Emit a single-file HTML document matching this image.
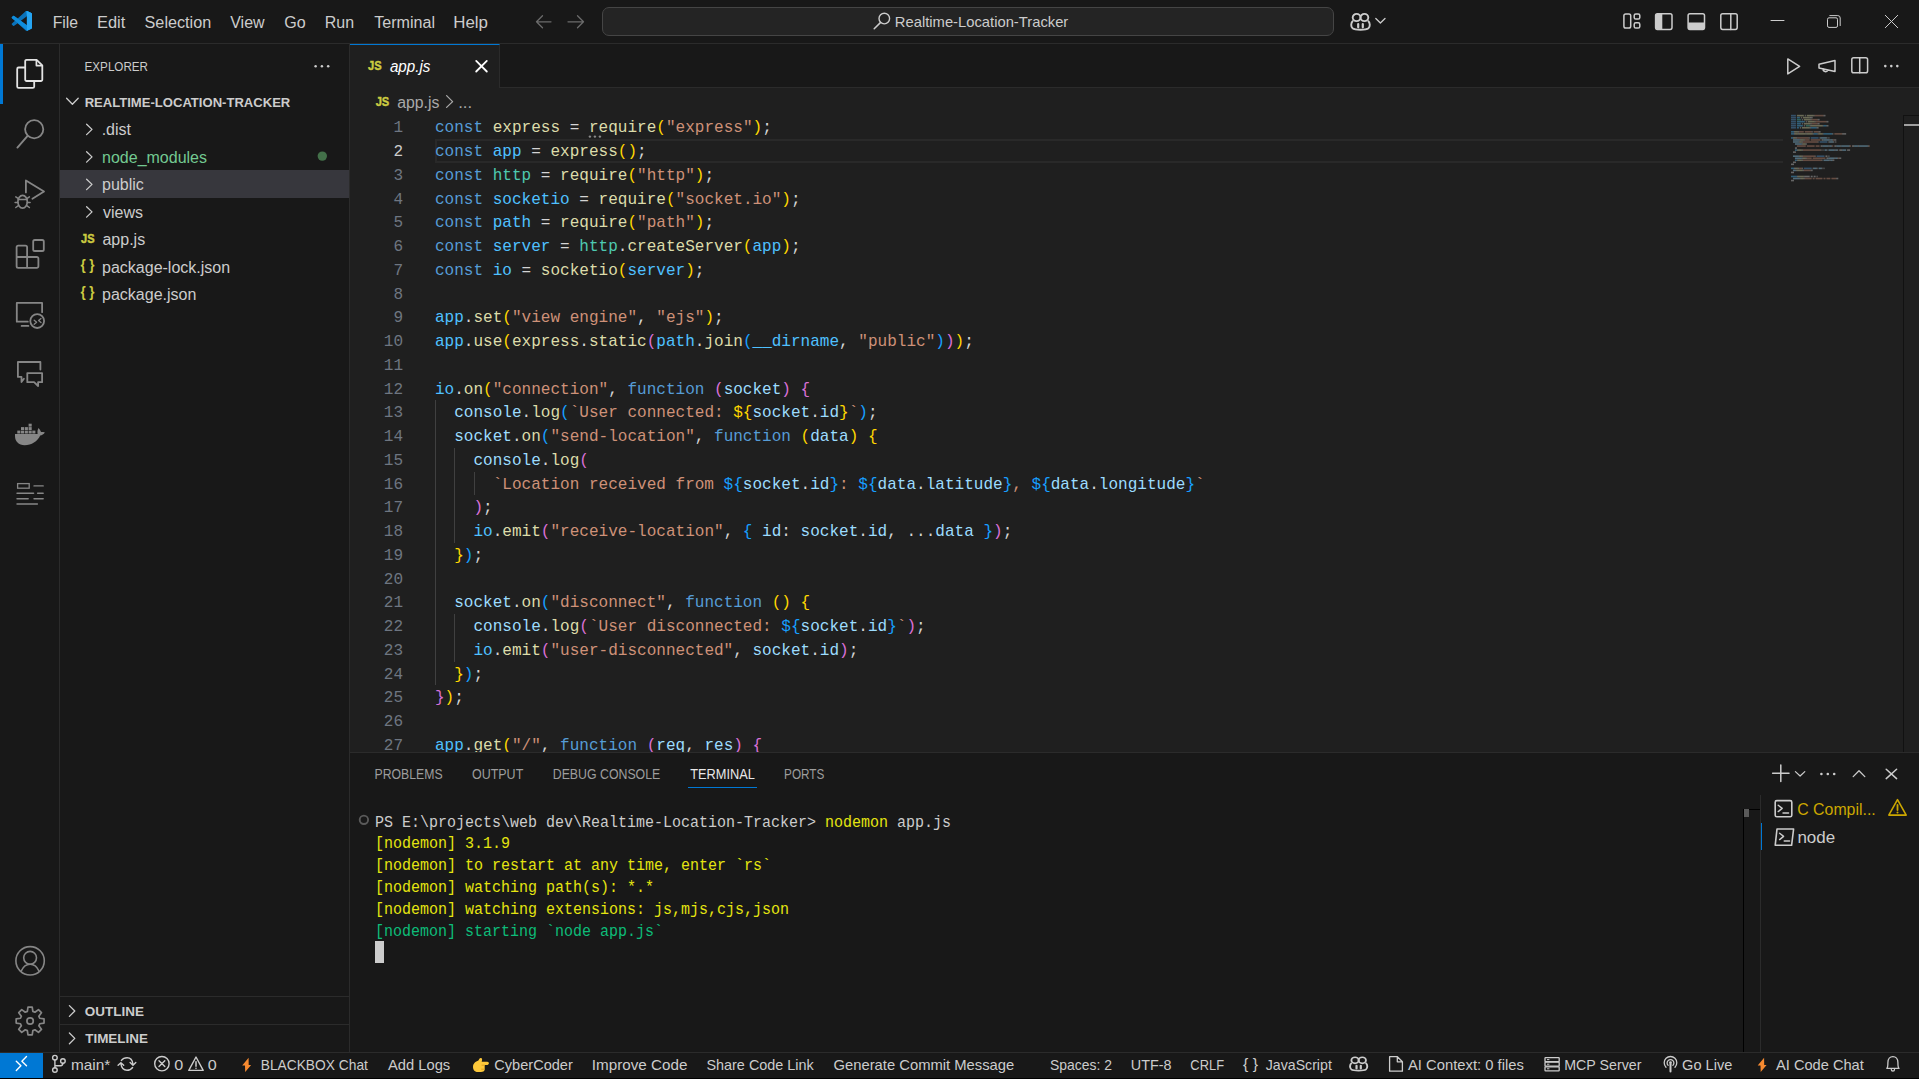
<!DOCTYPE html>
<html><head><meta charset="utf-8"><title>VS Code</title>
<style>
*{margin:0;padding:0;box-sizing:border-box}
html,body{width:1919px;height:1079px;overflow:hidden;background:#181818;font-family:"Liberation Sans",sans-serif;color:#cccccc}
.a{position:absolute}
#ov{position:absolute;left:0;top:0;width:1919px;height:1079px}
.ln{position:absolute;left:435px;height:23.75px;font-family:"Liberation Mono",monospace;font-size:17px;line-height:23.75px;white-space:pre;color:#d4d4d4;transform:scaleX(0.9430);transform-origin:0 0}
.num{position:absolute;left:360px;width:43px;text-align:right;height:23.75px;font-family:"Liberation Mono",monospace;font-size:17px;line-height:23.75px;color:#6e7681;transform:scaleX(0.943);transform-origin:43px 0}
.num.act{color:#cccccc}
.tl{position:absolute;left:375px;height:21.86px;font-family:"Liberation Mono",monospace;font-size:16px;line-height:21.86px;white-space:pre;transform:scaleX(0.9375);transform-origin:0 0}
.k{color:#569cd6}.v{color:#9cdcfe}.c{color:#4fc1ff}.f{color:#dcdcaa}.s{color:#ce9178}.n{color:#4ec9b0}
.b1{color:#ffd700}.b2{color:#da70d6}.b3{color:#179fff}
</style></head><body>
<div class="a" style="left:0;top:0;width:1919px;height:44px;background:#181818;border-bottom:1px solid #2b2b2b"></div>
<div class="a" style="left:602px;top:7px;width:731.5px;height:29px;background:#242424;border:1px solid #454545;border-radius:7px"></div>
<div class="a" style="left:0;top:44px;width:60px;height:1008px;background:#181818;border-right:1px solid #2b2b2b"></div>
<div class="a" style="left:0;top:44px;width:2.5px;height:60px;background:#0078d4"></div>
<div class="a" style="left:60px;top:44px;width:290px;height:1008px;background:#181818;border-right:1px solid #2b2b2b"></div>
<div class="a" style="left:60px;top:170.3px;width:289px;height:27.5px;background:#37373d"></div>
<div class="a" style="left:60px;top:996px;width:289px;height:1px;background:#2b2b2b"></div>
<div class="a" style="left:60px;top:1024px;width:289px;height:1px;background:#2b2b2b"></div>
<div class="a" style="left:350px;top:44px;width:1569px;height:44px;background:#181818;border-bottom:1px solid #2b2b2b"></div>
<div class="a" style="left:350px;top:44px;width:150px;height:44px;background:#1f1f1f;border-right:1px solid #2b2b2b;border-top:1.25px solid #0078d4"></div>
<div class="a" style="left:350px;top:87.5px;width:1569px;height:664.5px;background:#1f1f1f;overflow:hidden">
</div>
<div class="a" style="left:435px;top:138.8px;width:1348px;height:24.4px;border:2.2px solid #292929;border-right:none"></div>
<div class="a" style="left:1903px;top:115px;width:16px;height:637px;border-left:1px solid #111111;border-top:1px solid #111111"></div>
<div class="a" style="left:1904px;top:123.9px;width:15px;height:2.1px;background:#a0a0a0"></div>
<div class="a" style="left:0;top:0;width:1919px;height:752px;overflow:hidden">
<div class="num" style="top:116.40px">1</div><div class="num act" style="top:140.15px">2</div><div class="num" style="top:163.90px">3</div><div class="num" style="top:187.65px">4</div><div class="num" style="top:211.40px">5</div><div class="num" style="top:235.15px">6</div><div class="num" style="top:258.90px">7</div><div class="num" style="top:282.65px">8</div><div class="num" style="top:306.40px">9</div><div class="num" style="top:330.15px">10</div><div class="num" style="top:353.90px">11</div><div class="num" style="top:377.65px">12</div><div class="num" style="top:401.40px">13</div><div class="num" style="top:425.15px">14</div><div class="num" style="top:448.90px">15</div><div class="num" style="top:472.65px">16</div><div class="num" style="top:496.40px">17</div><div class="num" style="top:520.15px">18</div><div class="num" style="top:543.90px">19</div><div class="num" style="top:567.65px">20</div><div class="num" style="top:591.40px">21</div><div class="num" style="top:615.15px">22</div><div class="num" style="top:638.90px">23</div><div class="num" style="top:662.65px">24</div><div class="num" style="top:686.40px">25</div><div class="num" style="top:710.15px">26</div><div class="num" style="top:733.90px">27</div>
<div class="ln" style="top:116.40px"><span class="k">const</span> <span class="f">express</span> = <span class="f">require</span><span class="b1">(</span><span class="s">&quot;express&quot;</span><span class="b1">)</span>;</div><div class="ln" style="top:140.15px"><span class="k">const</span> <span class="c">app</span> = <span class="f">express</span><span class="b1">()</span>;</div><div class="ln" style="top:163.90px"><span class="k">const</span> <span class="n">http</span> = <span class="f">require</span><span class="b1">(</span><span class="s">&quot;http&quot;</span><span class="b1">)</span>;</div><div class="ln" style="top:187.65px"><span class="k">const</span> <span class="c">socketio</span> = <span class="f">require</span><span class="b1">(</span><span class="s">&quot;socket.io&quot;</span><span class="b1">)</span>;</div><div class="ln" style="top:211.40px"><span class="k">const</span> <span class="c">path</span> = <span class="f">require</span><span class="b1">(</span><span class="s">&quot;path&quot;</span><span class="b1">)</span>;</div><div class="ln" style="top:235.15px"><span class="k">const</span> <span class="c">server</span> = <span class="n">http</span>.<span class="f">createServer</span><span class="b1">(</span><span class="c">app</span><span class="b1">)</span>;</div><div class="ln" style="top:258.90px"><span class="k">const</span> <span class="c">io</span> = <span class="f">socketio</span><span class="b1">(</span><span class="c">server</span><span class="b1">)</span>;</div><div class="ln" style="top:282.65px"></div><div class="ln" style="top:306.40px"><span class="c">app</span>.<span class="f">set</span><span class="b1">(</span><span class="s">&quot;view engine&quot;</span>, <span class="s">&quot;ejs&quot;</span><span class="b1">)</span>;</div><div class="ln" style="top:330.15px"><span class="c">app</span>.<span class="f">use</span><span class="b1">(</span><span class="f">express</span>.<span class="f">static</span><span class="b2">(</span><span class="c">path</span>.<span class="f">join</span><span class="b3">(</span><span class="c">__dirname</span>, <span class="s">&quot;public&quot;</span><span class="b3">)</span><span class="b2">)</span><span class="b1">)</span>;</div><div class="ln" style="top:353.90px"></div><div class="ln" style="top:377.65px"><span class="c">io</span>.<span class="f">on</span><span class="b1">(</span><span class="s">&quot;connection&quot;</span>, <span class="k">function</span> <span class="b2">(</span><span class="v">socket</span><span class="b2">)</span> <span class="b2">{</span></div><div class="ln" style="top:401.40px">  <span class="v">console</span>.<span class="f">log</span><span class="b3">(</span><span class="s">`User connected: </span><span class="b1">${</span><span class="v">socket</span>.<span class="v">id</span><span class="b1">}</span><span class="s">`</span><span class="b3">)</span>;</div><div class="ln" style="top:425.15px">  <span class="v">socket</span>.<span class="f">on</span><span class="b3">(</span><span class="s">&quot;send-location&quot;</span>, <span class="k">function</span> <span class="b1">(</span><span class="v">data</span><span class="b1">)</span> <span class="b1">{</span></div><div class="ln" style="top:448.90px">    <span class="v">console</span>.<span class="f">log</span><span class="b2">(</span></div><div class="ln" style="top:472.65px">      <span class="s">`Location received from </span><span class="b3">${</span><span class="v">socket</span>.<span class="v">id</span><span class="b3">}</span><span class="s">: </span><span class="b3">${</span><span class="v">data</span>.<span class="v">latitude</span><span class="b3">}</span><span class="s">, </span><span class="b3">${</span><span class="v">data</span>.<span class="v">longitude</span><span class="b3">}</span><span class="s">`</span></div><div class="ln" style="top:496.40px">    <span class="b2">)</span>;</div><div class="ln" style="top:520.15px">    <span class="c">io</span>.<span class="f">emit</span><span class="b2">(</span><span class="s">&quot;receive-location&quot;</span>, <span class="b3">{</span> <span class="v">id</span>: <span class="v">socket</span>.<span class="v">id</span>, ...<span class="v">data</span> <span class="b3">}</span><span class="b2">)</span>;</div><div class="ln" style="top:543.90px">  <span class="b1">}</span><span class="b3">)</span>;</div><div class="ln" style="top:567.65px"></div><div class="ln" style="top:591.40px">  <span class="v">socket</span>.<span class="f">on</span><span class="b3">(</span><span class="s">&quot;disconnect&quot;</span>, <span class="k">function</span> <span class="b1">()</span> <span class="b1">{</span></div><div class="ln" style="top:615.15px">    <span class="v">console</span>.<span class="f">log</span><span class="b2">(</span><span class="s">`User disconnected: </span><span class="b3">${</span><span class="v">socket</span>.<span class="v">id</span><span class="b3">}</span><span class="s">`</span><span class="b2">)</span>;</div><div class="ln" style="top:638.90px">    <span class="c">io</span>.<span class="f">emit</span><span class="b2">(</span><span class="s">&quot;user-disconnected&quot;</span>, <span class="v">socket</span>.<span class="v">id</span><span class="b2">)</span>;</div><div class="ln" style="top:662.65px">  <span class="b1">}</span><span class="b3">)</span>;</div><div class="ln" style="top:686.40px"><span class="b2">}</span><span class="b1">)</span>;</div><div class="ln" style="top:710.15px"></div><div class="ln" style="top:733.90px"><span class="c">app</span>.<span class="f">get</span><span class="b1">(</span><span class="s">&quot;/&quot;</span>, <span class="k">function</span> <span class="b2">(</span><span class="v">req</span>, <span class="v">res</span><span class="b2">)</span> <span class="b2">{</span></div>
<div class="a" style="left:435.0px;top:400.40px;width:1px;height:285.00px;background:#404040"></div><div class="a" style="left:454.2px;top:447.90px;width:1px;height:95.00px;background:#404040"></div><div class="a" style="left:454.2px;top:614.15px;width:1px;height:47.50px;background:#404040"></div><div class="a" style="left:473.5px;top:471.65px;width:1px;height:23.75px;background:#404040"></div>
</div>

<div class="a" style="left:350px;top:752px;width:1569px;height:300px;background:#181818;border-top:1px solid #2b2b2b"></div>
<div class="a" style="left:688px;top:786.75px;width:69px;height:1.5px;background:#0078d4"></div>
<div class="tl" style="top:812.60px"><span style="color:#cccccc">PS E:\projects\web dev\Realtime-Location-Tracker&gt; </span><span style="color:#e5e510">nodemon</span><span style="color:#cccccc"> app.js</span></div><div class="tl" style="top:834.46px"><span style="color:#e5e510">[nodemon] 3.1.9</span></div><div class="tl" style="top:856.32px"><span style="color:#e5e510">[nodemon] to restart at any time, enter `rs`</span></div><div class="tl" style="top:878.18px"><span style="color:#e5e510">[nodemon] watching path(s): *.*</span></div><div class="tl" style="top:900.04px"><span style="color:#e5e510">[nodemon] watching extensions: js,mjs,cjs,json</span></div><div class="tl" style="top:921.90px"><span style="color:#0dbc79">[nodemon] starting `node app.js`</span></div>
<div class="a" style="left:375px;top:941.2px;width:9px;height:21.4px;background:#cccccc"></div>
<div class="a" style="left:1760px;top:795px;width:1px;height:257px;background:#2b2b2b"></div>
<div class="a" style="left:1761px;top:823px;width:1px;height:27px;background:#0078d4"></div>
<div class="a" style="left:1743px;top:809px;width:1px;height:243px;background:#000"></div>
<div class="a" style="left:1743px;top:809px;width:17px;height:1px;background:#000"></div>
<div class="a" style="left:1744px;top:809px;width:5px;height:8px;background:#5a5a5a"></div>
<div class="a" style="left:0;top:1051.5px;width:1919px;height:27.5px;background:#181818;border-top:1px solid #2b2b2b"></div>
<div class="a" style="left:0;top:1052.5px;width:43px;height:26.5px;background:#0078d4"></div>
<div class="a" style="left:0;top:1078px;width:1919px;height:1px;background:#000"></div>
<svg id="ov" width="1919" height="1079" viewBox="0 0 1919 1079" font-family='"Liberation Sans",sans-serif'>
<g transform="translate(11.7,10.9) scale(0.203,0.199)"><path fill="#0a72ba" d="M96.46 10.8L75.86.87a6.23 6.23 0 0 0-7.1 1.2L29.35 38.04 12.18 25.01a4.16 4.16 0 0 0-5.32.24L1.35 30.26a4.17 4.17 0 0 0 0 6.16L16.24 50 1.35 63.58a4.17 4.17 0 0 0 0 6.16l5.51 5.01a4.16 4.16 0 0 0 5.32.24l17.17-13.03 39.41 35.97a6.22 6.22 0 0 0 7.1 1.2l20.6-9.92A6.25 6.25 0 0 0 100 83.57V16.43a6.25 6.25 0 0 0-3.54-5.63zM75.01 72.7L45.1 50l29.91-22.7z"/><path fill="#0f8ddc" transform="translate(0,100) scale(1,-1)" d="M75.01 72.7V27.3L29.35 61.96 12.18 74.99a4.16 4.16 0 0 1-5.32-.24l-5.51-5.01a4.17 4.17 0 0 1 0-6.16L75.86.87 96.46 10.8A6.25 6.25 0 0 1 100 16.43v67.14a6.25 6.25 0 0 1-3.54 5.63l-20.6 9.92a6.22 6.22 0 0 1-7.1-1.2z"/><path fill="#26a5f2" d="M72.5 1.6 L75.86 .87 L96.46 10.8 A6.25 6.25 0 0 1 100 16.43 V83.57 A6.25 6.25 0 0 1 96.46 89.2 L75.86 99.13 L72.5 98.4 L75 96 V4 Z"/></g><path d="M551 21.8 H536.5 M542.5 15.8 L536.5 21.8 L542.5 27.8" fill="none" stroke="#6b6b6b" stroke-width="1.3" stroke-linecap="round" stroke-linejoin="round" /><path d="M568 21.8 H583.5 M577.5 15.8 L583.5 21.8 L577.5 27.8" fill="none" stroke="#6b6b6b" stroke-width="1.3" stroke-linecap="round" stroke-linejoin="round" /><circle cx="884.3" cy="18.6" r="5.3" fill="none" stroke="#cccccc" stroke-width="1.4"/><path d="M880.4 22.6 L874.2 28.8" fill="none" stroke="#cccccc" stroke-width="1.5" stroke-linecap="round" stroke-linejoin="round" /><g transform="translate(1350,11.7) scale(1.0,1.0)" fill="none" stroke="#cccccc" stroke-width="1.9"><ellipse cx="6.6" cy="5.8" rx="3.9" ry="3.6"/><ellipse cx="14.4" cy="5.8" rx="3.9" ry="3.6"/><path d="M3 9 C0.6 11 0.8 15 2.6 16.6 C5 18.6 16 18.6 18.4 16.6 C20.2 15 20.4 11 18 9"/><path d="M8.2 12.4 V15.6 M12.8 12.4 V15.6" stroke-width="2.2" stroke-linecap="round"/></g><path d="M1375.8 18.5 L1380.4 23 L1385 18.5" fill="none" stroke="#cccccc" stroke-width="1.3" stroke-linecap="round" stroke-linejoin="round" /><rect x="1623.9" y="13.9" width="6.8" height="14.2" rx="1.8" fill="none" stroke="#cccccc" stroke-width="1.5"/><rect x="1634.2" y="13.9" width="5.6" height="5.2" rx="1.6" fill="none" stroke="#cccccc" stroke-width="1.5"/><rect x="1634.2" y="22.8" width="5.6" height="5.2" rx="1.6" fill="none" stroke="#cccccc" stroke-width="1.5"/><rect x="1655.6" y="13.8" width="16.4" height="15.6" rx="1.8" fill="none" stroke="#cccccc" stroke-width="1.5"/><path d="M1655.6 15.5 a1.8 1.8 0 0 1 1.8-1.8 H1662.3 V29.4 H1657.4 a1.8 1.8 0 0 1-1.8-1.8Z" fill="#cccccc"/><rect x="1688.1" y="13.8" width="16.4" height="15.6" rx="1.8" fill="none" stroke="#cccccc" stroke-width="1.5"/><path d="M1688.1 22.5 H1704.5 V27.6 a1.8 1.8 0 0 1-1.8 1.8 H1689.9 a1.8 1.8 0 0 1-1.8-1.8Z" fill="#cccccc"/><rect x="1720.8" y="13.8" width="16.4" height="15.6" rx="1.8" fill="none" stroke="#cccccc" stroke-width="1.5"/><path d="M1730.8 13.8 V29.4" fill="none" stroke="#cccccc" stroke-width="1.5" stroke-linecap="round" stroke-linejoin="round" /><path d="M1771 20.5 H1784" fill="none" stroke="#cccccc" stroke-width="1.0" stroke-linecap="round" stroke-linejoin="round" /><rect x="1827.5" y="17.8" width="10" height="9.6" rx="1.5" fill="none" stroke="#cccccc" stroke-width="1"/><path d="M1829.8 15.6 H1837.8 a2.4 2.4 0 0 1 2.4 2.4 V25.6" fill="none" stroke="#cccccc" stroke-width="1.0" stroke-linecap="round" stroke-linejoin="round" /><path d="M1885.3 15.3 L1897.7 27.7 M1897.7 15.3 L1885.3 27.7" fill="none" stroke="#cccccc" stroke-width="1.0" stroke-linecap="round" stroke-linejoin="round" /><path d="M26.6 59.8 H36.6 L42.3 65.4 V79.6 a1.4 1.4 0 0 1 -1.4 1.4 H26.6 a1.4 1.4 0 0 1 -1.4 -1.4 V61.2 a1.4 1.4 0 0 1 1.4 -1.4 Z" fill="none" stroke="#e4e4e4" stroke-width="1.8" stroke-linecap="round" stroke-linejoin="round" /><path d="M36.4 60.4 V65.6 H41.6" fill="none" stroke="#e4e4e4" stroke-width="1.7" stroke-linecap="round" stroke-linejoin="round" /><path d="M25.2 67.5 H18.6 a1.4 1.4 0 0 0 -1.4 1.4 V86.5 a1.4 1.4 0 0 0 1.4 1.4 H32.8 a1.4 1.4 0 0 0 1.4 -1.4 V81" fill="none" stroke="#e4e4e4" stroke-width="1.8" stroke-linecap="round" stroke-linejoin="round" /><circle cx="34.2" cy="129.3" r="9.1" fill="none" stroke="#868686" stroke-width="1.8"/><path d="M27.6 135.9 L17.4 147.6" fill="none" stroke="#868686" stroke-width="1.9" stroke-linecap="round" stroke-linejoin="round" /><path d="M25.9 192.4 V180.4 L44 191.6 L32.4 198.8" fill="none" stroke="#868686" stroke-width="1.8" stroke-linecap="round" stroke-linejoin="round" /><ellipse cx="22.6" cy="201.7" rx="4.7" ry="6.4" fill="none" stroke="#868686" stroke-width="1.7"/><path d="M15.8 196.9 L18.4 198.6 M15.1 202.5 H17.9 M15.8 207.5 L18.4 205.6 M29.4 196.9 L26.8 198.6 M30.1 202.5 H27.3 M29.4 207.5 L26.8 205.6 M18.2 199.6 H27" fill="none" stroke="#868686" stroke-width="1.5" stroke-linecap="round" stroke-linejoin="round" /><path d="M18.2 245.7 H25.5 a1.6 1.6 0 0 1 1.6 1.6 V257 H36.8 a1.6 1.6 0 0 1 1.6 1.6 V266.2 a1.6 1.6 0 0 1 -1.6 1.6 H18.2 a1.6 1.6 0 0 1 -1.6 -1.6 V247.3 a1.6 1.6 0 0 1 1.6 -1.6 Z M16.6 257 H27.1 V267.8" fill="none" stroke="#868686" stroke-width="1.8"/><rect x="33.2" y="240" width="10.6" height="11" rx="1.6" fill="none" stroke="#868686" stroke-width="1.8"/><path d="M27.8 321.7 H16.8 V302.9 H42.1 V312.2" fill="none" stroke="#868686" stroke-width="1.8" stroke-linecap="round" stroke-linejoin="round" stroke-linecap="butt"/><path d="M21.6 325.9 H28.4" fill="none" stroke="#868686" stroke-width="1.8" stroke-linecap="round" stroke-linejoin="round" /><circle cx="37.2" cy="321.1" r="6.9" fill="none" stroke="#868686" stroke-width="1.8"/><path d="M34.2 320.2 L36.6 322.3 L34.2 324.3 M41 318.6 L38.6 320.6 L41 322.6" fill="none" stroke="#868686" stroke-width="1.3" stroke-linecap="round" stroke-linejoin="round" /><path d="M40.4 369.6 V362 H17.9 V376.9 H21.5 V382 L23.9 378.8" fill="none" stroke="#868686" stroke-width="1.8" stroke-linecap="round" stroke-linejoin="round" stroke-linecap="butt"/><path d="M27.3 373.1 H42.1 V382.2 H38.1 V386 L34.1 382.2 H27.3 Z" fill="none" stroke="#868686" stroke-width="1.8" stroke-linecap="round" stroke-linejoin="round" /><path d="M15 434 H37.6 C37.2 431.6 37.6 429.4 38.6 428 C39.6 429.2 40.6 430.6 41 432 C42.2 431.9 43.6 432 44.9 432.5 C43.6 434.2 42 435.2 40.2 435.6 C37.4 441.6 31.6 445.2 24.6 445.2 C18.6 445.2 15 441.4 15 436 Z" fill="#868686" /><rect x="17.3" y="430.6" width="3.1" height="2.9" fill="#868686"/><rect x="21.0" y="430.6" width="3.1" height="2.9" fill="#868686"/><rect x="24.8" y="430.6" width="3.1" height="2.9" fill="#868686"/><rect x="28.6" y="430.6" width="3.1" height="2.9" fill="#868686"/><rect x="32.3" y="430.6" width="3.1" height="2.9" fill="#868686"/><rect x="21.0" y="427.1" width="3.1" height="2.9" fill="#868686"/><rect x="24.8" y="427.1" width="3.1" height="2.9" fill="#868686"/><rect x="28.6" y="427.1" width="3.1" height="2.9" fill="#868686"/><rect x="28.6" y="423.7" width="3.1" height="2.9" fill="#868686"/><rect x="17.6" y="483.6" width="11.6" height="4.6" fill="none" stroke="#868686" stroke-width="1.3"/><path d="M34 485.9 H43.2 M17 493.2 H33.6 M37.6 493.2 H43.2 M17 498.8 H28.2 M34 498.8 H43.2 M17 504 H37.4" fill="none" stroke="#868686" stroke-width="1.4" stroke-linecap="round" stroke-linejoin="round" stroke-linecap="butt"/><circle cx="30.1" cy="960.8" r="14.2" fill="none" stroke="#868686" stroke-width="1.6"/><circle cx="30.1" cy="957.8" r="6.4" fill="none" stroke="#868686" stroke-width="1.6"/><path d="M21.4 970.8 C23.4 966 26.4 964.2 30.1 964.2 C33.8 964.2 36.8 966 38.8 970.8" fill="none" stroke="#868686" stroke-width="1.6" stroke-linecap="round" stroke-linejoin="round" /><path d="M27.34 1011.39 L27.99 1007.06 L32.21 1007.06 L32.86 1011.39 L34.94 1012.25 L38.47 1009.65 L41.45 1012.63 L38.85 1016.16 L39.71 1018.24 L44.04 1018.89 L44.04 1023.11 L39.71 1023.76 L38.85 1025.84 L41.45 1029.37 L38.47 1032.35 L34.94 1029.75 L32.86 1030.61 L32.21 1034.94 L27.99 1034.94 L27.34 1030.61 L25.26 1029.75 L21.73 1032.35 L18.75 1029.37 L21.35 1025.84 L20.49 1023.76 L16.16 1023.11 L16.16 1018.89 L20.49 1018.24 L21.35 1016.16 L18.75 1012.63 L21.73 1009.65 L25.26 1012.25Z" fill="none" stroke="#868686" stroke-width="1.7" stroke-linecap="round" stroke-linejoin="round" /><circle cx="30.1" cy="1021" r="3.2" fill="none" stroke="#868686" stroke-width="1.7"/><circle cx="315.6" cy="66.2" r="1.25" fill="#cccccc"/><circle cx="321.9" cy="66.2" r="1.25" fill="#cccccc"/><circle cx="328.2" cy="66.2" r="1.25" fill="#cccccc"/><path d="M66.6 98.3 L72.4 104.2 L78.2 98.3" fill="none" stroke="#cccccc" stroke-width="1.3" stroke-linecap="round" stroke-linejoin="round" /><path d="M86.6 124.20 L92 129.40 L86.6 134.60" fill="none" stroke="#cccccc" stroke-width="1.3" stroke-linecap="round" stroke-linejoin="round" /><path d="M86.6 151.70 L92 156.90 L86.6 162.10" fill="none" stroke="#cccccc" stroke-width="1.3" stroke-linecap="round" stroke-linejoin="round" /><path d="M86.6 179.20 L92 184.40 L86.6 189.60" fill="none" stroke="#cccccc" stroke-width="1.3" stroke-linecap="round" stroke-linejoin="round" /><path d="M86.6 206.70 L92 211.90 L86.6 217.10" fill="none" stroke="#cccccc" stroke-width="1.3" stroke-linecap="round" stroke-linejoin="round" /><circle cx="322.3" cy="156.1" r="4.7" fill="#437049"/><path d="M69.4 1005.6 L74.8 1011 L69.4 1016.4" fill="none" stroke="#cccccc" stroke-width="1.3" stroke-linecap="round" stroke-linejoin="round" /><path d="M69.4 1033 L74.8 1038.4 L69.4 1043.8" fill="none" stroke="#cccccc" stroke-width="1.3" stroke-linecap="round" stroke-linejoin="round" /><path d="M476.2 60.9 L486.8 71.5 M486.8 60.9 L476.2 71.5" fill="none" stroke="#ffffff" stroke-width="1.8" stroke-linecap="round" stroke-linejoin="round" /><path d="M446.6 95.6 L452.6 101.6 L446.6 107.4" fill="none" stroke="#a9a9a9" stroke-width="1.3" stroke-linecap="round" stroke-linejoin="round" /><path d="M1787.8 58.9 L1799.6 66.4 L1787.8 73.9 Z" fill="none" stroke="#cccccc" stroke-width="1.5" stroke-linecap="round" stroke-linejoin="round" /><path d="M1819 64.2 L1835 60.6 V71.6 L1819 68 Z M1823 68.8 a2.6 2.6 0 0 0 5 1.2" fill="none" stroke="#cccccc" stroke-width="1.5" stroke-linecap="round" stroke-linejoin="round" /><rect x="1851.8" y="57.8" width="15.8" height="15" rx="1.8" fill="none" stroke="#cccccc" stroke-width="1.5"/><path d="M1859.7 57.8 V72.8" fill="none" stroke="#cccccc" stroke-width="1.5" stroke-linecap="round" stroke-linejoin="round" /><circle cx="1885.3" cy="66.1" r="1.3" fill="#cccccc"/><circle cx="1891.3" cy="66.1" r="1.3" fill="#cccccc"/><circle cx="1897.3" cy="66.1" r="1.3" fill="#cccccc"/><path d="M1772.6 773.2 H1789 M1780.8 765 V781.4" fill="none" stroke="#cccccc" stroke-width="1.5" stroke-linecap="round" stroke-linejoin="round" /><path d="M1795.4 771.6 L1800.1 776 L1804.8 771.6" fill="none" stroke="#cccccc" stroke-width="1.2" stroke-linecap="round" stroke-linejoin="round" /><circle cx="1821.4" cy="774" r="1.3" fill="#cccccc"/><circle cx="1827.8" cy="774" r="1.3" fill="#cccccc"/><circle cx="1834.2" cy="774" r="1.3" fill="#cccccc"/><path d="M1853.2 776.6 L1859 770.8 L1864.8 776.6" fill="none" stroke="#cccccc" stroke-width="1.3" stroke-linecap="round" stroke-linejoin="round" /><path d="M1886.2 769.2 L1896.6 778.6 M1896.6 769.2 L1886.2 778.6" fill="none" stroke="#cccccc" stroke-width="1.5" stroke-linecap="round" stroke-linejoin="round" /><rect x="1775.2" y="800.6" width="16.6" height="16.2" rx="1.6" fill="none" stroke="#cccccc" stroke-width="1.6"/><path d="M1778.2 805.2 L1782.2 808.4 L1778.2 811.6 M1783 813 H1788.6" fill="none" stroke="#cccccc" stroke-width="1.4" stroke-linecap="round" stroke-linejoin="round" /><path d="M1897.5 799.6 L1906.2 815.1 H1888.8 Z" fill="none" stroke="#cca700" stroke-width="1.6" stroke-linecap="round" stroke-linejoin="round" /><path d="M1897.5 805 V810" fill="none" stroke="#cca700" stroke-width="1.8" stroke-linecap="round" stroke-linejoin="round" /><circle cx="1897.5" cy="812.6" r="1" fill="#cca700"/><path d="M1777 829 H1793.6 L1791.6 845.3 H1775.2 Z" fill="none" stroke="#cccccc" stroke-width="1.6" stroke-linecap="round" stroke-linejoin="round" /><path d="M1779.6 833.2 L1783.6 836.4 L1779.6 839.6 M1784.2 841 H1789.6" fill="none" stroke="#cccccc" stroke-width="1.4" stroke-linecap="round" stroke-linejoin="round" /><circle cx="363.9" cy="819.8" r="4.2" fill="none" stroke="#5a5a5a" stroke-width="1.9"/><path d="M16.3 1061.3 L20.9 1065.8 L16.3 1070.4" fill="none" stroke="#ffffff" stroke-width="1.4" stroke-linecap="round" stroke-linejoin="round" /><path d="M26.5 1056.6 L21.9 1061.2 L26.5 1065.8" fill="none" stroke="#ffffff" stroke-width="1.4" stroke-linecap="round" stroke-linejoin="round" /><circle cx="54.9" cy="1057.7" r="2.3" fill="none" stroke="#cccccc" stroke-width="1.4"/><circle cx="54.9" cy="1070" r="2.3" fill="none" stroke="#cccccc" stroke-width="1.4"/><circle cx="62.9" cy="1061" r="2.3" fill="none" stroke="#cccccc" stroke-width="1.4"/><path d="M54.9 1060 V1067.7 M54.9 1065.7 H60.6 C61.9 1065.7 62.9 1064.7 62.9 1063.3" fill="none" stroke="#cccccc" stroke-width="1.4" stroke-linecap="round" stroke-linejoin="round" /><path d="M121.4 1060.4 C122.7 1058.6 124.8 1057.7 127.1 1057.7 C130.1 1057.7 132.5 1059.9 132.9 1064.2 M130.1 1062.6 L133 1065.3 L135.8 1062.6" fill="none" stroke="#cccccc" stroke-width="1.4" stroke-linecap="round" stroke-linejoin="round" /><path d="M132.6 1067.5 C131.2 1069.4 129.3 1070.3 127 1070.3 C124 1070.3 121.5 1068.2 120.9 1063.7 M118.1 1065.3 L120.9 1062.7 L123.7 1065.3" fill="none" stroke="#cccccc" stroke-width="1.4" stroke-linecap="round" stroke-linejoin="round" /><circle cx="161.9" cy="1063.7" r="7.2" fill="none" stroke="#cccccc" stroke-width="1.4"/><path d="M159 1060.8 L164.8 1066.6 M164.8 1060.8 L159 1066.6" fill="none" stroke="#cccccc" stroke-width="1.4" stroke-linecap="round" stroke-linejoin="round" /><path d="M196 1057 L203.2 1070.4 H188.8 Z" fill="none" stroke="#cccccc" stroke-width="1.4" stroke-linecap="round" stroke-linejoin="round" /><path d="M196 1061.8 V1066.2" fill="none" stroke="#cccccc" stroke-width="1.5" stroke-linecap="round" stroke-linejoin="round" /><circle cx="196" cy="1068.2" r="0.8" fill="#cccccc"/><path d="M248.60 1057.80 L242.20 1065.50 H245.00 L245.20 1072.00 L251.10 1064.90 H248.70 Z" fill="#f78a30" /><path d="M1764.10 1057.80 L1757.70 1065.50 H1760.50 L1760.70 1072.00 L1766.60 1064.90 H1764.20 Z" fill="#f78a30" /><path d="M473 1067 C473 1063.6 475.6 1061.6 478.4 1060.6 L479.4 1058.8 C480.2 1057.6 482.4 1058 482.1 1059.8 L481.7 1061.8 H487.3 C488.3 1061.8 488.9 1062.6 488.9 1063.35 C488.9 1064.2 488.3 1064.9 487.3 1064.9 H484.7 V1069.8 C484.3 1071.4 483 1072 481 1072 H478 C475 1072 473 1070 473 1067 Z" fill="#fdc83a"/><path d="M481.6 1065.2 H484.6 M481.2 1069.2 H484.2" stroke="#e09a1c" stroke-width="0.9"/><g transform="translate(1348.9,1055.4) scale(0.93,0.84)" fill="none" stroke="#cccccc" stroke-width="2.043010752688172"><ellipse cx="6.6" cy="5.8" rx="3.9" ry="3.6"/><ellipse cx="14.4" cy="5.8" rx="3.9" ry="3.6"/><path d="M3 9 C0.6 11 0.8 15 2.6 16.6 C5 18.6 16 18.6 18.4 16.6 C20.2 15 20.4 11 18 9"/><path d="M8.2 12.4 V15.6 M12.8 12.4 V15.6" stroke-width="2.3655913978494625" stroke-linecap="round"/></g><path d="M1389.6 1056.7 H1397.4 L1402.4 1061.7 V1071.2 H1389.6 Z M1397.3 1056.9 V1061.8 H1402.2" fill="none" stroke="#cccccc" stroke-width="1.3" stroke-linecap="round" stroke-linejoin="round" /><rect x="1545" y="1057.6" width="14.2" height="4" rx="0.6" fill="none" stroke="#cccccc" stroke-width="1.3"/><rect x="1545" y="1062.2" width="14.2" height="4" rx="0.6" fill="none" stroke="#cccccc" stroke-width="1.3"/><rect x="1545" y="1066.8" width="14.2" height="4" rx="0.6" fill="none" stroke="#cccccc" stroke-width="1.3"/><path d="M1547.4 1059.6 H1549 M1547.4 1064.2 H1549 M1547.4 1068.8 H1549" fill="none" stroke="#cccccc" stroke-width="1.0" stroke-linecap="round" stroke-linejoin="round" /><circle cx="1670.5" cy="1062.7" r="1.4" fill="#cccccc"/><path d="M1670.5 1064.2 V1071.4" fill="none" stroke="#cccccc" stroke-width="2.0" stroke-linecap="round" stroke-linejoin="round" /><path d="M1666 1067.2 A6.3 6.3 0 1 1 1675 1067.2 M1668.1 1065.4 A3.4 3.4 0 1 1 1672.9 1065.4" fill="none" stroke="#cccccc" stroke-width="1.3" stroke-linecap="round" stroke-linejoin="round" /><path d="M1886.8 1068.4 H1899 C1898 1067.4 1897.9 1066.2 1897.9 1062.4 C1897.9 1059 1895.8 1056.6 1892.9 1056.6 C1890 1056.6 1887.9 1059 1887.9 1062.4 C1887.9 1066.2 1887.8 1067.4 1886.8 1068.4 Z M1891.3 1069.4 a1.6 1.6 0 0 0 3.2 0" fill="none" stroke="#cccccc" stroke-width="1.3" stroke-linecap="round" stroke-linejoin="round" /><circle cx="589.9" cy="136.6" r="1.2" fill="#8a8a8a"/><circle cx="594.9" cy="136.6" r="1.2" fill="#8a8a8a"/><circle cx="599.9" cy="136.6" r="1.2" fill="#8a8a8a"/><rect x="1791.00" y="114.80" width="4.92" height="1.6" fill="#569cd6" opacity="0.40"/><rect x="1796.91" y="114.80" width="6.89" height="1.6" fill="#dcdcaa" opacity="0.40"/><rect x="1804.79" y="114.80" width="0.98" height="1.6" fill="#d4d4d4" opacity="0.40"/><rect x="1806.76" y="114.80" width="6.89" height="1.6" fill="#dcdcaa" opacity="0.40"/><rect x="1813.65" y="114.80" width="0.98" height="1.6" fill="#d4d4d4" opacity="0.40"/><rect x="1814.64" y="114.80" width="8.87" height="1.6" fill="#ce9178" opacity="0.40"/><rect x="1823.50" y="114.80" width="0.98" height="1.6" fill="#d4d4d4" opacity="0.40"/><rect x="1824.49" y="114.80" width="0.98" height="1.6" fill="#d4d4d4" opacity="0.40"/><rect x="1791.00" y="116.83" width="4.92" height="1.6" fill="#569cd6" opacity="0.40"/><rect x="1796.91" y="116.83" width="2.96" height="1.6" fill="#4fc1ff" opacity="0.40"/><rect x="1800.85" y="116.83" width="0.98" height="1.6" fill="#d4d4d4" opacity="0.40"/><rect x="1802.82" y="116.83" width="6.89" height="1.6" fill="#dcdcaa" opacity="0.40"/><rect x="1809.71" y="116.83" width="1.97" height="1.6" fill="#d4d4d4" opacity="0.40"/><rect x="1811.68" y="116.83" width="0.98" height="1.6" fill="#d4d4d4" opacity="0.40"/><rect x="1791.00" y="118.86" width="4.92" height="1.6" fill="#569cd6" opacity="0.40"/><rect x="1796.91" y="118.86" width="3.94" height="1.6" fill="#4ec9b0" opacity="0.40"/><rect x="1801.83" y="118.86" width="0.98" height="1.6" fill="#d4d4d4" opacity="0.40"/><rect x="1803.80" y="118.86" width="6.89" height="1.6" fill="#dcdcaa" opacity="0.40"/><rect x="1810.70" y="118.86" width="0.98" height="1.6" fill="#d4d4d4" opacity="0.40"/><rect x="1811.68" y="118.86" width="5.91" height="1.6" fill="#ce9178" opacity="0.40"/><rect x="1817.59" y="118.86" width="0.98" height="1.6" fill="#d4d4d4" opacity="0.40"/><rect x="1818.58" y="118.86" width="0.98" height="1.6" fill="#d4d4d4" opacity="0.40"/><rect x="1791.00" y="120.89" width="4.92" height="1.6" fill="#569cd6" opacity="0.40"/><rect x="1796.91" y="120.89" width="7.88" height="1.6" fill="#4fc1ff" opacity="0.40"/><rect x="1805.77" y="120.89" width="0.98" height="1.6" fill="#d4d4d4" opacity="0.40"/><rect x="1807.74" y="120.89" width="6.89" height="1.6" fill="#dcdcaa" opacity="0.40"/><rect x="1814.64" y="120.89" width="0.98" height="1.6" fill="#d4d4d4" opacity="0.40"/><rect x="1815.62" y="120.89" width="10.83" height="1.6" fill="#ce9178" opacity="0.40"/><rect x="1826.46" y="120.89" width="0.98" height="1.6" fill="#d4d4d4" opacity="0.40"/><rect x="1827.44" y="120.89" width="0.98" height="1.6" fill="#d4d4d4" opacity="0.40"/><rect x="1791.00" y="122.92" width="4.92" height="1.6" fill="#569cd6" opacity="0.40"/><rect x="1796.91" y="122.92" width="3.94" height="1.6" fill="#4fc1ff" opacity="0.40"/><rect x="1801.83" y="122.92" width="0.98" height="1.6" fill="#d4d4d4" opacity="0.40"/><rect x="1803.80" y="122.92" width="6.89" height="1.6" fill="#dcdcaa" opacity="0.40"/><rect x="1810.70" y="122.92" width="0.98" height="1.6" fill="#d4d4d4" opacity="0.40"/><rect x="1811.68" y="122.92" width="5.91" height="1.6" fill="#ce9178" opacity="0.40"/><rect x="1817.59" y="122.92" width="0.98" height="1.6" fill="#d4d4d4" opacity="0.40"/><rect x="1818.58" y="122.92" width="0.98" height="1.6" fill="#d4d4d4" opacity="0.40"/><rect x="1791.00" y="124.95" width="4.92" height="1.6" fill="#569cd6" opacity="0.40"/><rect x="1796.91" y="124.95" width="5.91" height="1.6" fill="#4fc1ff" opacity="0.40"/><rect x="1803.80" y="124.95" width="0.98" height="1.6" fill="#d4d4d4" opacity="0.40"/><rect x="1805.77" y="124.95" width="3.94" height="1.6" fill="#4ec9b0" opacity="0.40"/><rect x="1809.71" y="124.95" width="0.98" height="1.6" fill="#d4d4d4" opacity="0.40"/><rect x="1810.70" y="124.95" width="11.82" height="1.6" fill="#dcdcaa" opacity="0.40"/><rect x="1822.52" y="124.95" width="0.98" height="1.6" fill="#d4d4d4" opacity="0.40"/><rect x="1823.50" y="124.95" width="2.96" height="1.6" fill="#4fc1ff" opacity="0.40"/><rect x="1826.46" y="124.95" width="0.98" height="1.6" fill="#d4d4d4" opacity="0.40"/><rect x="1827.44" y="124.95" width="0.98" height="1.6" fill="#d4d4d4" opacity="0.40"/><rect x="1791.00" y="126.98" width="4.92" height="1.6" fill="#569cd6" opacity="0.40"/><rect x="1796.91" y="126.98" width="1.97" height="1.6" fill="#4fc1ff" opacity="0.40"/><rect x="1799.86" y="126.98" width="0.98" height="1.6" fill="#d4d4d4" opacity="0.40"/><rect x="1801.83" y="126.98" width="7.88" height="1.6" fill="#dcdcaa" opacity="0.40"/><rect x="1809.71" y="126.98" width="0.98" height="1.6" fill="#d4d4d4" opacity="0.40"/><rect x="1810.70" y="126.98" width="5.91" height="1.6" fill="#4fc1ff" opacity="0.40"/><rect x="1816.61" y="126.98" width="0.98" height="1.6" fill="#d4d4d4" opacity="0.40"/><rect x="1817.59" y="126.98" width="0.98" height="1.6" fill="#d4d4d4" opacity="0.40"/><rect x="1791.00" y="131.04" width="2.96" height="1.6" fill="#4fc1ff" opacity="0.40"/><rect x="1793.95" y="131.04" width="0.98" height="1.6" fill="#d4d4d4" opacity="0.40"/><rect x="1794.94" y="131.04" width="2.96" height="1.6" fill="#dcdcaa" opacity="0.40"/><rect x="1797.89" y="131.04" width="0.98" height="1.6" fill="#d4d4d4" opacity="0.40"/><rect x="1798.88" y="131.04" width="4.92" height="1.6" fill="#ce9178" opacity="0.40"/><rect x="1804.79" y="131.04" width="6.89" height="1.6" fill="#ce9178" opacity="0.40"/><rect x="1811.68" y="131.04" width="0.98" height="1.6" fill="#d4d4d4" opacity="0.40"/><rect x="1813.65" y="131.04" width="4.92" height="1.6" fill="#ce9178" opacity="0.40"/><rect x="1818.58" y="131.04" width="0.98" height="1.6" fill="#d4d4d4" opacity="0.40"/><rect x="1819.56" y="131.04" width="0.98" height="1.6" fill="#d4d4d4" opacity="0.40"/><rect x="1791.00" y="133.07" width="2.96" height="1.6" fill="#4fc1ff" opacity="0.40"/><rect x="1793.95" y="133.07" width="0.98" height="1.6" fill="#d4d4d4" opacity="0.40"/><rect x="1794.94" y="133.07" width="2.96" height="1.6" fill="#dcdcaa" opacity="0.40"/><rect x="1797.89" y="133.07" width="0.98" height="1.6" fill="#d4d4d4" opacity="0.40"/><rect x="1798.88" y="133.07" width="6.89" height="1.6" fill="#dcdcaa" opacity="0.40"/><rect x="1805.77" y="133.07" width="0.98" height="1.6" fill="#d4d4d4" opacity="0.40"/><rect x="1806.76" y="133.07" width="5.91" height="1.6" fill="#dcdcaa" opacity="0.40"/><rect x="1812.67" y="133.07" width="0.98" height="1.6" fill="#d4d4d4" opacity="0.40"/><rect x="1813.65" y="133.07" width="3.94" height="1.6" fill="#4fc1ff" opacity="0.40"/><rect x="1817.59" y="133.07" width="0.98" height="1.6" fill="#d4d4d4" opacity="0.40"/><rect x="1818.58" y="133.07" width="3.94" height="1.6" fill="#dcdcaa" opacity="0.40"/><rect x="1822.52" y="133.07" width="0.98" height="1.6" fill="#d4d4d4" opacity="0.40"/><rect x="1823.50" y="133.07" width="8.87" height="1.6" fill="#4fc1ff" opacity="0.40"/><rect x="1832.37" y="133.07" width="0.98" height="1.6" fill="#d4d4d4" opacity="0.40"/><rect x="1834.34" y="133.07" width="7.88" height="1.6" fill="#ce9178" opacity="0.40"/><rect x="1842.22" y="133.07" width="0.98" height="1.6" fill="#d4d4d4" opacity="0.40"/><rect x="1843.20" y="133.07" width="0.98" height="1.6" fill="#d4d4d4" opacity="0.40"/><rect x="1844.19" y="133.07" width="0.98" height="1.6" fill="#d4d4d4" opacity="0.40"/><rect x="1845.17" y="133.07" width="0.98" height="1.6" fill="#d4d4d4" opacity="0.40"/><rect x="1791.00" y="137.13" width="1.97" height="1.6" fill="#4fc1ff" opacity="0.40"/><rect x="1792.97" y="137.13" width="0.98" height="1.6" fill="#d4d4d4" opacity="0.40"/><rect x="1793.95" y="137.13" width="1.97" height="1.6" fill="#dcdcaa" opacity="0.40"/><rect x="1795.92" y="137.13" width="0.98" height="1.6" fill="#d4d4d4" opacity="0.40"/><rect x="1796.91" y="137.13" width="11.82" height="1.6" fill="#ce9178" opacity="0.40"/><rect x="1808.73" y="137.13" width="0.98" height="1.6" fill="#d4d4d4" opacity="0.40"/><rect x="1810.70" y="137.13" width="7.88" height="1.6" fill="#569cd6" opacity="0.40"/><rect x="1819.56" y="137.13" width="0.98" height="1.6" fill="#d4d4d4" opacity="0.40"/><rect x="1820.55" y="137.13" width="5.91" height="1.6" fill="#9cdcfe" opacity="0.40"/><rect x="1826.46" y="137.13" width="0.98" height="1.6" fill="#d4d4d4" opacity="0.40"/><rect x="1828.43" y="137.13" width="0.98" height="1.6" fill="#d4d4d4" opacity="0.40"/><rect x="1792.97" y="139.16" width="6.89" height="1.6" fill="#9cdcfe" opacity="0.40"/><rect x="1799.87" y="139.16" width="0.98" height="1.6" fill="#d4d4d4" opacity="0.40"/><rect x="1800.85" y="139.16" width="2.96" height="1.6" fill="#dcdcaa" opacity="0.40"/><rect x="1803.80" y="139.16" width="0.98" height="1.6" fill="#d4d4d4" opacity="0.40"/><rect x="1804.79" y="139.16" width="4.92" height="1.6" fill="#ce9178" opacity="0.40"/><rect x="1810.70" y="139.16" width="9.85" height="1.6" fill="#ce9178" opacity="0.40"/><rect x="1821.53" y="139.16" width="1.97" height="1.6" fill="#d4d4d4" opacity="0.40"/><rect x="1823.50" y="139.16" width="5.91" height="1.6" fill="#9cdcfe" opacity="0.40"/><rect x="1829.41" y="139.16" width="0.98" height="1.6" fill="#d4d4d4" opacity="0.40"/><rect x="1830.40" y="139.16" width="1.97" height="1.6" fill="#9cdcfe" opacity="0.40"/><rect x="1832.37" y="139.16" width="0.98" height="1.6" fill="#d4d4d4" opacity="0.40"/><rect x="1833.35" y="139.16" width="0.98" height="1.6" fill="#ce9178" opacity="0.40"/><rect x="1834.34" y="139.16" width="0.98" height="1.6" fill="#d4d4d4" opacity="0.40"/><rect x="1835.32" y="139.16" width="0.98" height="1.6" fill="#d4d4d4" opacity="0.40"/><rect x="1792.97" y="141.19" width="5.91" height="1.6" fill="#9cdcfe" opacity="0.40"/><rect x="1798.88" y="141.19" width="0.98" height="1.6" fill="#d4d4d4" opacity="0.40"/><rect x="1799.87" y="141.19" width="1.97" height="1.6" fill="#dcdcaa" opacity="0.40"/><rect x="1801.84" y="141.19" width="0.98" height="1.6" fill="#d4d4d4" opacity="0.40"/><rect x="1802.82" y="141.19" width="14.78" height="1.6" fill="#ce9178" opacity="0.40"/><rect x="1817.60" y="141.19" width="0.98" height="1.6" fill="#d4d4d4" opacity="0.40"/><rect x="1819.56" y="141.19" width="7.88" height="1.6" fill="#569cd6" opacity="0.40"/><rect x="1828.43" y="141.19" width="0.98" height="1.6" fill="#d4d4d4" opacity="0.40"/><rect x="1829.41" y="141.19" width="3.94" height="1.6" fill="#9cdcfe" opacity="0.40"/><rect x="1833.35" y="141.19" width="0.98" height="1.6" fill="#d4d4d4" opacity="0.40"/><rect x="1835.32" y="141.19" width="0.98" height="1.6" fill="#d4d4d4" opacity="0.40"/><rect x="1794.94" y="143.22" width="6.89" height="1.6" fill="#9cdcfe" opacity="0.40"/><rect x="1801.84" y="143.22" width="0.98" height="1.6" fill="#d4d4d4" opacity="0.40"/><rect x="1802.82" y="143.22" width="2.96" height="1.6" fill="#dcdcaa" opacity="0.40"/><rect x="1805.77" y="143.22" width="0.98" height="1.6" fill="#d4d4d4" opacity="0.40"/><rect x="1796.91" y="145.25" width="8.87" height="1.6" fill="#ce9178" opacity="0.40"/><rect x="1806.76" y="145.25" width="7.88" height="1.6" fill="#ce9178" opacity="0.40"/><rect x="1815.62" y="145.25" width="3.94" height="1.6" fill="#ce9178" opacity="0.40"/><rect x="1820.55" y="145.25" width="1.97" height="1.6" fill="#d4d4d4" opacity="0.40"/><rect x="1822.52" y="145.25" width="5.91" height="1.6" fill="#9cdcfe" opacity="0.40"/><rect x="1828.43" y="145.25" width="0.98" height="1.6" fill="#d4d4d4" opacity="0.40"/><rect x="1829.41" y="145.25" width="1.97" height="1.6" fill="#9cdcfe" opacity="0.40"/><rect x="1831.38" y="145.25" width="0.98" height="1.6" fill="#d4d4d4" opacity="0.40"/><rect x="1832.37" y="145.25" width="0.98" height="1.6" fill="#ce9178" opacity="0.40"/><rect x="1834.34" y="145.25" width="1.97" height="1.6" fill="#d4d4d4" opacity="0.40"/><rect x="1836.31" y="145.25" width="3.94" height="1.6" fill="#9cdcfe" opacity="0.40"/><rect x="1840.25" y="145.25" width="0.98" height="1.6" fill="#d4d4d4" opacity="0.40"/><rect x="1841.23" y="145.25" width="7.88" height="1.6" fill="#9cdcfe" opacity="0.40"/><rect x="1849.11" y="145.25" width="0.98" height="1.6" fill="#d4d4d4" opacity="0.40"/><rect x="1850.10" y="145.25" width="0.98" height="1.6" fill="#ce9178" opacity="0.40"/><rect x="1852.07" y="145.25" width="1.97" height="1.6" fill="#d4d4d4" opacity="0.40"/><rect x="1854.04" y="145.25" width="3.94" height="1.6" fill="#9cdcfe" opacity="0.40"/><rect x="1857.98" y="145.25" width="0.98" height="1.6" fill="#d4d4d4" opacity="0.40"/><rect x="1858.96" y="145.25" width="8.87" height="1.6" fill="#9cdcfe" opacity="0.40"/><rect x="1867.83" y="145.25" width="0.98" height="1.6" fill="#d4d4d4" opacity="0.40"/><rect x="1868.81" y="145.25" width="0.98" height="1.6" fill="#ce9178" opacity="0.40"/><rect x="1794.94" y="147.28" width="0.98" height="1.6" fill="#d4d4d4" opacity="0.40"/><rect x="1795.92" y="147.28" width="0.98" height="1.6" fill="#d4d4d4" opacity="0.40"/><rect x="1794.94" y="149.31" width="1.97" height="1.6" fill="#4fc1ff" opacity="0.40"/><rect x="1796.91" y="149.31" width="0.98" height="1.6" fill="#d4d4d4" opacity="0.40"/><rect x="1797.89" y="149.31" width="3.94" height="1.6" fill="#dcdcaa" opacity="0.40"/><rect x="1801.84" y="149.31" width="0.98" height="1.6" fill="#d4d4d4" opacity="0.40"/><rect x="1802.82" y="149.31" width="17.73" height="1.6" fill="#ce9178" opacity="0.40"/><rect x="1820.55" y="149.31" width="0.98" height="1.6" fill="#d4d4d4" opacity="0.40"/><rect x="1822.52" y="149.31" width="0.98" height="1.6" fill="#d4d4d4" opacity="0.40"/><rect x="1824.49" y="149.31" width="1.97" height="1.6" fill="#9cdcfe" opacity="0.40"/><rect x="1826.46" y="149.31" width="0.98" height="1.6" fill="#d4d4d4" opacity="0.40"/><rect x="1828.43" y="149.31" width="5.91" height="1.6" fill="#9cdcfe" opacity="0.40"/><rect x="1834.34" y="149.31" width="0.98" height="1.6" fill="#d4d4d4" opacity="0.40"/><rect x="1835.32" y="149.31" width="1.97" height="1.6" fill="#9cdcfe" opacity="0.40"/><rect x="1837.29" y="149.31" width="0.98" height="1.6" fill="#d4d4d4" opacity="0.40"/><rect x="1839.26" y="149.31" width="2.96" height="1.6" fill="#d4d4d4" opacity="0.40"/><rect x="1842.22" y="149.31" width="3.94" height="1.6" fill="#9cdcfe" opacity="0.40"/><rect x="1847.14" y="149.31" width="0.98" height="1.6" fill="#d4d4d4" opacity="0.40"/><rect x="1848.13" y="149.31" width="0.98" height="1.6" fill="#d4d4d4" opacity="0.40"/><rect x="1849.11" y="149.31" width="0.98" height="1.6" fill="#d4d4d4" opacity="0.40"/><rect x="1792.97" y="151.34" width="0.98" height="1.6" fill="#d4d4d4" opacity="0.40"/><rect x="1793.95" y="151.34" width="0.98" height="1.6" fill="#d4d4d4" opacity="0.40"/><rect x="1794.94" y="151.34" width="0.98" height="1.6" fill="#d4d4d4" opacity="0.40"/><rect x="1792.97" y="155.40" width="5.91" height="1.6" fill="#9cdcfe" opacity="0.40"/><rect x="1798.88" y="155.40" width="0.98" height="1.6" fill="#d4d4d4" opacity="0.40"/><rect x="1799.87" y="155.40" width="1.97" height="1.6" fill="#dcdcaa" opacity="0.40"/><rect x="1801.84" y="155.40" width="0.98" height="1.6" fill="#d4d4d4" opacity="0.40"/><rect x="1802.82" y="155.40" width="11.82" height="1.6" fill="#ce9178" opacity="0.40"/><rect x="1814.64" y="155.40" width="0.98" height="1.6" fill="#d4d4d4" opacity="0.40"/><rect x="1816.61" y="155.40" width="7.88" height="1.6" fill="#569cd6" opacity="0.40"/><rect x="1825.47" y="155.40" width="1.97" height="1.6" fill="#d4d4d4" opacity="0.40"/><rect x="1828.43" y="155.40" width="0.98" height="1.6" fill="#d4d4d4" opacity="0.40"/><rect x="1794.94" y="157.43" width="6.89" height="1.6" fill="#9cdcfe" opacity="0.40"/><rect x="1801.84" y="157.43" width="0.98" height="1.6" fill="#d4d4d4" opacity="0.40"/><rect x="1802.82" y="157.43" width="2.96" height="1.6" fill="#dcdcaa" opacity="0.40"/><rect x="1805.77" y="157.43" width="0.98" height="1.6" fill="#d4d4d4" opacity="0.40"/><rect x="1806.76" y="157.43" width="4.92" height="1.6" fill="#ce9178" opacity="0.40"/><rect x="1812.67" y="157.43" width="12.80" height="1.6" fill="#ce9178" opacity="0.40"/><rect x="1826.46" y="157.43" width="1.97" height="1.6" fill="#d4d4d4" opacity="0.40"/><rect x="1828.43" y="157.43" width="5.91" height="1.6" fill="#9cdcfe" opacity="0.40"/><rect x="1834.34" y="157.43" width="0.98" height="1.6" fill="#d4d4d4" opacity="0.40"/><rect x="1835.32" y="157.43" width="1.97" height="1.6" fill="#9cdcfe" opacity="0.40"/><rect x="1837.29" y="157.43" width="0.98" height="1.6" fill="#d4d4d4" opacity="0.40"/><rect x="1838.28" y="157.43" width="0.98" height="1.6" fill="#ce9178" opacity="0.40"/><rect x="1839.26" y="157.43" width="0.98" height="1.6" fill="#d4d4d4" opacity="0.40"/><rect x="1840.25" y="157.43" width="0.98" height="1.6" fill="#d4d4d4" opacity="0.40"/><rect x="1794.94" y="159.46" width="1.97" height="1.6" fill="#4fc1ff" opacity="0.40"/><rect x="1796.91" y="159.46" width="0.98" height="1.6" fill="#d4d4d4" opacity="0.40"/><rect x="1797.89" y="159.46" width="3.94" height="1.6" fill="#dcdcaa" opacity="0.40"/><rect x="1801.84" y="159.46" width="0.98" height="1.6" fill="#d4d4d4" opacity="0.40"/><rect x="1802.82" y="159.46" width="18.71" height="1.6" fill="#ce9178" opacity="0.40"/><rect x="1821.53" y="159.46" width="0.98" height="1.6" fill="#d4d4d4" opacity="0.40"/><rect x="1823.50" y="159.46" width="5.91" height="1.6" fill="#9cdcfe" opacity="0.40"/><rect x="1829.41" y="159.46" width="0.98" height="1.6" fill="#d4d4d4" opacity="0.40"/><rect x="1830.40" y="159.46" width="1.97" height="1.6" fill="#9cdcfe" opacity="0.40"/><rect x="1832.37" y="159.46" width="0.98" height="1.6" fill="#d4d4d4" opacity="0.40"/><rect x="1833.35" y="159.46" width="0.98" height="1.6" fill="#d4d4d4" opacity="0.40"/><rect x="1792.97" y="161.49" width="0.98" height="1.6" fill="#d4d4d4" opacity="0.40"/><rect x="1793.95" y="161.49" width="0.98" height="1.6" fill="#d4d4d4" opacity="0.40"/><rect x="1794.94" y="161.49" width="0.98" height="1.6" fill="#d4d4d4" opacity="0.40"/><rect x="1791.00" y="163.52" width="0.98" height="1.6" fill="#d4d4d4" opacity="0.40"/><rect x="1791.98" y="163.52" width="0.98" height="1.6" fill="#d4d4d4" opacity="0.40"/><rect x="1792.97" y="163.52" width="0.98" height="1.6" fill="#d4d4d4" opacity="0.40"/><rect x="1791.00" y="167.58" width="2.96" height="1.6" fill="#4fc1ff" opacity="0.40"/><rect x="1793.95" y="167.58" width="0.98" height="1.6" fill="#d4d4d4" opacity="0.40"/><rect x="1794.94" y="167.58" width="2.96" height="1.6" fill="#dcdcaa" opacity="0.40"/><rect x="1797.89" y="167.58" width="0.98" height="1.6" fill="#d4d4d4" opacity="0.40"/><rect x="1798.88" y="167.58" width="2.96" height="1.6" fill="#ce9178" opacity="0.40"/><rect x="1801.83" y="167.58" width="0.98" height="1.6" fill="#d4d4d4" opacity="0.40"/><rect x="1803.80" y="167.58" width="7.88" height="1.6" fill="#569cd6" opacity="0.40"/><rect x="1812.67" y="167.58" width="0.98" height="1.6" fill="#d4d4d4" opacity="0.40"/><rect x="1813.65" y="167.58" width="2.96" height="1.6" fill="#9cdcfe" opacity="0.40"/><rect x="1816.61" y="167.58" width="0.98" height="1.6" fill="#d4d4d4" opacity="0.40"/><rect x="1818.58" y="167.58" width="2.96" height="1.6" fill="#9cdcfe" opacity="0.40"/><rect x="1821.53" y="167.58" width="0.98" height="1.6" fill="#d4d4d4" opacity="0.40"/><rect x="1823.50" y="167.58" width="0.98" height="1.6" fill="#d4d4d4" opacity="0.40"/><rect x="1792.97" y="169.61" width="2.96" height="1.6" fill="#9cdcfe" opacity="0.40"/><rect x="1795.92" y="169.61" width="0.98" height="1.6" fill="#d4d4d4" opacity="0.40"/><rect x="1796.91" y="169.61" width="5.91" height="1.6" fill="#dcdcaa" opacity="0.40"/><rect x="1802.82" y="169.61" width="0.98" height="1.6" fill="#d4d4d4" opacity="0.40"/><rect x="1803.80" y="169.61" width="6.89" height="1.6" fill="#ce9178" opacity="0.40"/><rect x="1810.70" y="169.61" width="0.98" height="1.6" fill="#d4d4d4" opacity="0.40"/><rect x="1811.68" y="169.61" width="0.98" height="1.6" fill="#d4d4d4" opacity="0.40"/><rect x="1791.00" y="171.64" width="0.98" height="1.6" fill="#d4d4d4" opacity="0.40"/><rect x="1791.98" y="171.64" width="0.98" height="1.6" fill="#d4d4d4" opacity="0.40"/><rect x="1792.97" y="171.64" width="0.98" height="1.6" fill="#d4d4d4" opacity="0.40"/><rect x="1791.00" y="175.70" width="5.91" height="1.6" fill="#4fc1ff" opacity="0.40"/><rect x="1796.91" y="175.70" width="0.98" height="1.6" fill="#d4d4d4" opacity="0.40"/><rect x="1797.89" y="175.70" width="5.91" height="1.6" fill="#dcdcaa" opacity="0.40"/><rect x="1803.81" y="175.70" width="0.98" height="1.6" fill="#d4d4d4" opacity="0.40"/><rect x="1804.79" y="175.70" width="4.92" height="1.6" fill="#d4d4d4" opacity="0.40"/><rect x="1810.70" y="175.70" width="1.97" height="1.6" fill="#d4d4d4" opacity="0.40"/><rect x="1813.65" y="175.70" width="1.97" height="1.6" fill="#d4d4d4" opacity="0.40"/><rect x="1816.61" y="175.70" width="0.98" height="1.6" fill="#d4d4d4" opacity="0.40"/><rect x="1792.97" y="177.73" width="6.89" height="1.6" fill="#9cdcfe" opacity="0.40"/><rect x="1799.87" y="177.73" width="0.98" height="1.6" fill="#d4d4d4" opacity="0.40"/><rect x="1800.85" y="177.73" width="2.96" height="1.6" fill="#dcdcaa" opacity="0.40"/><rect x="1803.80" y="177.73" width="0.98" height="1.6" fill="#d4d4d4" opacity="0.40"/><rect x="1804.79" y="177.73" width="6.89" height="1.6" fill="#ce9178" opacity="0.40"/><rect x="1812.67" y="177.73" width="1.97" height="1.6" fill="#ce9178" opacity="0.40"/><rect x="1815.62" y="177.73" width="6.89" height="1.6" fill="#ce9178" opacity="0.40"/><rect x="1823.50" y="177.73" width="1.97" height="1.6" fill="#ce9178" opacity="0.40"/><rect x="1826.46" y="177.73" width="3.94" height="1.6" fill="#ce9178" opacity="0.40"/><rect x="1831.38" y="177.73" width="4.92" height="1.6" fill="#ce9178" opacity="0.40"/><rect x="1836.31" y="177.73" width="0.98" height="1.6" fill="#d4d4d4" opacity="0.40"/><rect x="1837.29" y="177.73" width="0.98" height="1.6" fill="#d4d4d4" opacity="0.40"/><rect x="1791.00" y="179.76" width="0.98" height="1.6" fill="#d4d4d4" opacity="0.40"/><rect x="1791.98" y="179.76" width="0.98" height="1.6" fill="#d4d4d4" opacity="0.40"/><rect x="1792.97" y="179.76" width="0.98" height="1.6" fill="#d4d4d4" opacity="0.40"/>
<text x="52.74" y="28.20" font-size="16" fill="#cccccc" textLength="25.39" lengthAdjust="spacingAndGlyphs">File</text><text x="96.99" y="28.20" font-size="16" fill="#cccccc" textLength="28.25" lengthAdjust="spacingAndGlyphs">Edit</text><text x="144.57" y="28.20" font-size="16" fill="#cccccc" textLength="66.66" lengthAdjust="spacingAndGlyphs">Selection</text><text x="230.22" y="28.20" font-size="16" fill="#cccccc" textLength="34.37" lengthAdjust="spacingAndGlyphs">View</text><text x="284.20" y="28.20" font-size="16" fill="#cccccc" textLength="21.43" lengthAdjust="spacingAndGlyphs">Go</text><text x="324.72" y="28.20" font-size="16" fill="#cccccc" textLength="29.31" lengthAdjust="spacingAndGlyphs">Run</text><text x="374.18" y="28.20" font-size="16" fill="#cccccc" textLength="60.83" lengthAdjust="spacingAndGlyphs">Terminal</text><text x="453.25" y="28.20" font-size="16" fill="#cccccc" textLength="34.76" lengthAdjust="spacingAndGlyphs">Help</text><text x="894.82" y="27.30" font-size="15" fill="#cccccc" textLength="173.48" lengthAdjust="spacingAndGlyphs">Realtime-Location-Tracker</text><text x="84.57" y="71.20" font-size="13.5" fill="#cccccc" textLength="63.47" lengthAdjust="spacingAndGlyphs">EXPLORER</text><text x="84.65" y="106.60" font-size="13.5" fill="#cccccc" font-family='"Liberation Sans"' font-weight="bold" textLength="205.67" lengthAdjust="spacingAndGlyphs">REALTIME-LOCATION-TRACKER</text><text x="101.66" y="135.00" font-size="16" fill="#cccccc">.dist</text><text x="102.06" y="162.50" font-size="16" fill="#73c991">node_modules</text><text x="102.06" y="190.00" font-size="16" fill="#cccccc">public</text><text x="103.02" y="217.50" font-size="16" fill="#cccccc">views</text><text x="102.46" y="245.00" font-size="16" fill="#cccccc">app.js</text><text x="102.06" y="272.50" font-size="16" fill="#cccccc">package-lock.json</text><text x="102.06" y="300.00" font-size="16" fill="#cccccc">package.json</text><text x="84.86" y="1015.60" font-size="13.5" fill="#cccccc" font-family='"Liberation Sans"' font-weight="bold" textLength="59.06" lengthAdjust="spacingAndGlyphs">OUTLINE</text><text x="85.27" y="1043.30" font-size="13.5" fill="#cccccc" font-family='"Liberation Sans"' font-weight="bold" textLength="62.63" lengthAdjust="spacingAndGlyphs">TIMELINE</text><text x="389.90" y="72.10" font-size="16" fill="#ffffff" font-family='"Liberation Sans"' font-style="italic" textLength="40.59" lengthAdjust="spacingAndGlyphs">app.js</text><text x="397.17" y="107.80" font-size="16" fill="#a9a9a9" textLength="42.26" lengthAdjust="spacingAndGlyphs">app.js</text><text x="458.19" y="107.80" font-size="16" fill="#a9a9a9" textLength="13.98" lengthAdjust="spacingAndGlyphs">...</text><text x="374.52" y="779.20" font-size="13.75" fill="#9d9d9d" textLength="68.06" lengthAdjust="spacingAndGlyphs">PROBLEMS</text><text x="471.94" y="779.20" font-size="13.75" fill="#9d9d9d" textLength="51.32" lengthAdjust="spacingAndGlyphs">OUTPUT</text><text x="552.76" y="779.20" font-size="13.75" fill="#9d9d9d" textLength="107.53" lengthAdjust="spacingAndGlyphs">DEBUG CONSOLE</text><text x="690.24" y="779.20" font-size="13.75" fill="#e7e7e7" textLength="64.66" lengthAdjust="spacingAndGlyphs">TERMINAL</text><text x="784.06" y="779.20" font-size="13.75" fill="#9d9d9d" textLength="40.24" lengthAdjust="spacingAndGlyphs">PORTS</text><text x="1797.21" y="814.90" font-size="16" fill="#cca700" textLength="78.53" lengthAdjust="spacingAndGlyphs">C Compil...</text><text x="1797.40" y="842.70" font-size="16" fill="#cccccc" textLength="37.76" lengthAdjust="spacingAndGlyphs">node</text><text x="70.90" y="1070.00" font-size="15" fill="#cccccc" textLength="39.28" lengthAdjust="spacingAndGlyphs">main*</text><text x="174.35" y="1070.00" font-size="15" fill="#cccccc" textLength="8.98" lengthAdjust="spacingAndGlyphs">0</text><text x="207.85" y="1070.00" font-size="15" fill="#cccccc" textLength="8.98" lengthAdjust="spacingAndGlyphs">0</text><text x="260.70" y="1070.00" font-size="15" fill="#cccccc" textLength="107.19" lengthAdjust="spacingAndGlyphs">BLACKBOX Chat</text><text x="388.00" y="1070.00" font-size="15" fill="#cccccc" textLength="62.23" lengthAdjust="spacingAndGlyphs">Add Logs</text><text x="494.27" y="1070.00" font-size="15" fill="#cccccc" textLength="78.57" lengthAdjust="spacingAndGlyphs">CyberCoder</text><text x="591.83" y="1070.00" font-size="15" fill="#cccccc" textLength="95.57" lengthAdjust="spacingAndGlyphs">Improve Code</text><text x="706.45" y="1070.00" font-size="15" fill="#cccccc" textLength="107.34" lengthAdjust="spacingAndGlyphs">Share Code Link</text><text x="833.46" y="1070.00" font-size="15" fill="#cccccc" textLength="180.84" lengthAdjust="spacingAndGlyphs">Generate Commit Message</text><text x="1050.07" y="1070.00" font-size="15" fill="#cccccc" textLength="61.96" lengthAdjust="spacingAndGlyphs">Spaces: 2</text><text x="1130.82" y="1070.00" font-size="15" fill="#cccccc" textLength="40.70" lengthAdjust="spacingAndGlyphs">UTF-8</text><text x="1190.36" y="1070.00" font-size="15" fill="#cccccc" textLength="33.68" lengthAdjust="spacingAndGlyphs">CRLF</text><text x="1265.79" y="1070.00" font-size="15" fill="#cccccc" textLength="66.03" lengthAdjust="spacingAndGlyphs">JavaScript</text><text x="1408.00" y="1070.00" font-size="15" fill="#cccccc" textLength="115.85" lengthAdjust="spacingAndGlyphs">AI Context: 0 files</text><text x="1564.26" y="1070.00" font-size="15" fill="#cccccc" textLength="77.19" lengthAdjust="spacingAndGlyphs">MCP Server</text><text x="1682.07" y="1070.00" font-size="15" fill="#cccccc" textLength="50.31" lengthAdjust="spacingAndGlyphs">Go Live</text><text x="1776.00" y="1070.00" font-size="15" fill="#cccccc" textLength="87.82" lengthAdjust="spacingAndGlyphs">AI Code Chat</text><text stroke="#cbcb41" stroke-width="0.45" x="81.03" y="242.80" font-size="12.879999999999999" fill="#cbcb41" font-family='"Liberation Sans"' font-weight="bold" textLength="13.49" lengthAdjust="spacingAndGlyphs">JS</text><text x="80.40" y="269.98" font-size="14.866310160427807" fill="#cbcb41" font-family='"Liberation Sans"' font-weight="bold" textLength="14.22" lengthAdjust="spacingAndGlyphs">{ }</text><text x="80.40" y="297.38" font-size="14.866310160427807" fill="#cbcb41" font-family='"Liberation Sans"' font-weight="bold" textLength="14.22" lengthAdjust="spacingAndGlyphs">{ }</text><text stroke="#cbcb41" stroke-width="0.45" x="368.03" y="69.80" font-size="13.16" fill="#cbcb41" font-family='"Liberation Sans"' font-weight="bold" textLength="13.59" lengthAdjust="spacingAndGlyphs">JS</text><text stroke="#cbcb41" stroke-width="0.45" x="375.63" y="105.80" font-size="12.879999999999999" fill="#cbcb41" font-family='"Liberation Sans"' font-weight="bold" textLength="13.59" lengthAdjust="spacingAndGlyphs">JS</text><text x="1242.96" y="1069.40" font-size="14.5" fill="#cccccc" textLength="14.97" lengthAdjust="spacingAndGlyphs">{ }</text>
</svg>
</body></html>
